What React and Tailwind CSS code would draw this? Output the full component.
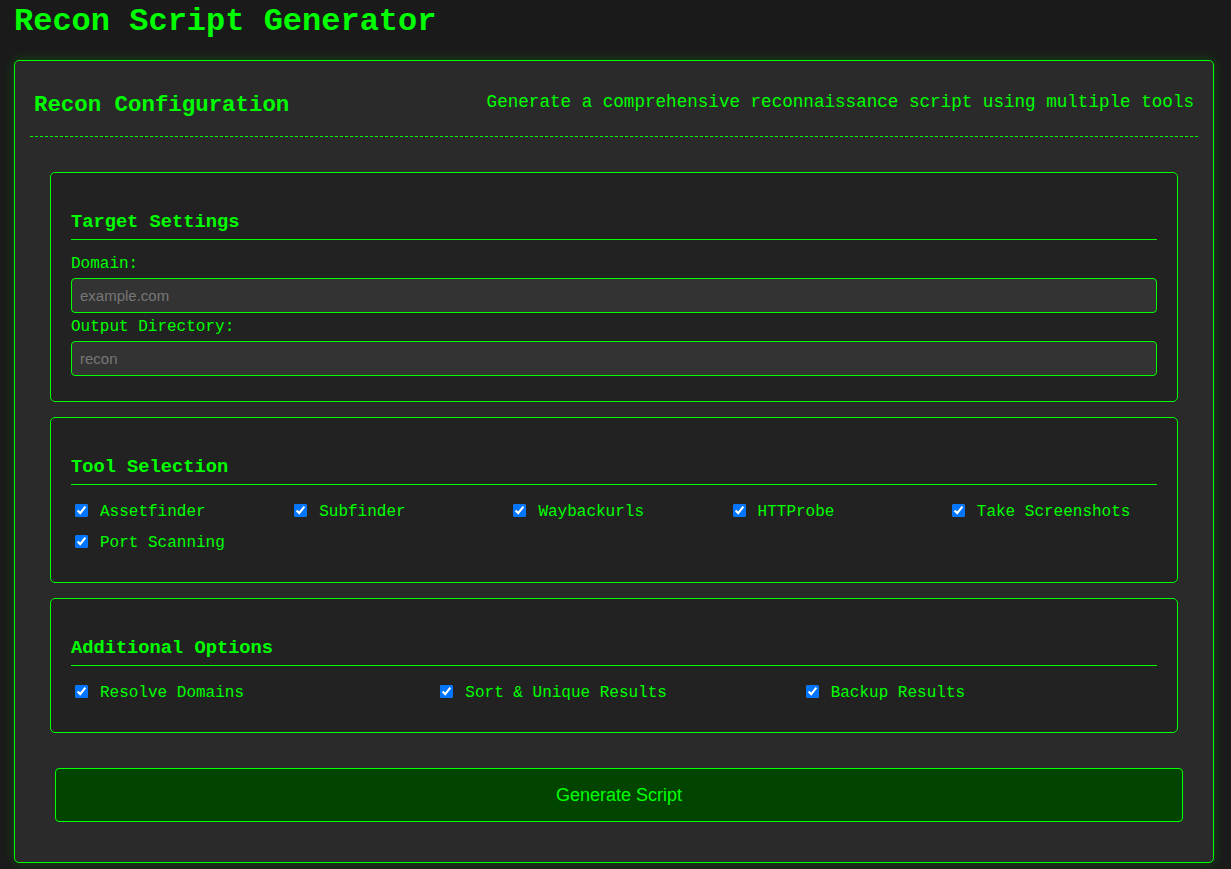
import React from "react";

const mono = { fontFamily: '"Liberation Mono", "Courier New", monospace' };

function Check({ label }) {
  return (
    <label className="flex items-center h-[21px] mb-[10px] text-[16px] leading-[21px] text-[#00ff00] cursor-pointer">
      <input type="checkbox" defaultChecked className="m-0 ml-[4px] mr-[3px] w-[13px] h-[13px] shrink-0" />
      <span className="ml-[9px] mt-[3px] whitespace-nowrap">{label}</span>
    </label>
  );
}

function SectionTitle({ children }) {
  return (
    <h3 className="mt-[19px] mb-[15px] pb-[6px] border-b border-[#00ff00] text-[18.72px] leading-[21px] font-bold text-[#00ff00]">
      {children}
    </h3>
  );
}

function Section({ title, children }) {
  return (
    <div className="bg-[#222222] border border-[#00ff00] rounded-[5px] px-[20px] pt-[20px] pb-[20px] mb-[15px]">
      <SectionTitle>{title}</SectionTitle>
      {children}
    </div>
  );
}

export default function App() {
  const tools = ["Assetfinder", "Subfinder", "Waybackurls", "HTTProbe", "Take Screenshots", "Port Scanning"];
  const opts = ["Resolve Domains", "Sort & Unique Results", "Backup Results"];
  return (
    <div className="min-h-screen bg-[#1a1a1a] pt-[4px] pb-[20px]" style={mono}>
      <div className="ml-[14px] w-[1200px]">
        <h1 className="text-[32px] leading-[36px] font-bold text-[#00ff00] mb-[20px]">Recon Script Generator</h1>
        <div className="bg-[#2a2a2a] border border-[#00ff00] rounded-[5px] p-[15px] shadow-[0_0_12px_rgba(0,255,0,0.22)]">
          <div className="flex justify-between items-start px-[4px] pt-[14px] pb-[20px] border-b border-dashed border-[#00ff00]">
            <h2 className="mt-[2px] -mb-[2px] text-[22.4px] leading-[26px] font-bold text-[#00ff00]">Recon Configuration</h2>
            <p className="mt-[2px] text-[17.6px] leading-[20px] text-[#00ff00]">
              Generate a comprehensive reconnaissance script using multiple tools
            </p>
          </div>
          <div className="px-[20px] pt-[35px] pb-[20px]">
            <Section title="Target Settings">
              <label className="block text-[16px] leading-[18px] text-[#00ff00] mb-[5px]">Domain:</label>
              <input
                type="text"
                placeholder="example.com"
                className="block w-full h-[35px] px-[8px] mb-[5px] bg-[#333333] border border-[#00ff00] rounded-[4px] text-[15px] text-[#00ff00] placeholder:text-[#777777] outline-none"
                style={{ fontFamily: '"Liberation Sans", Arial, sans-serif' }}
              />
              <label className="block text-[16px] leading-[18px] text-[#00ff00] mb-[5px]">Output Directory:</label>
              <input
                type="text"
                placeholder="recon"
                className="block w-full h-[35px] px-[8px] mb-[5px] bg-[#333333] border border-[#00ff00] rounded-[4px] text-[15px] text-[#00ff00] placeholder:text-[#777777] outline-none"
                style={{ fontFamily: '"Liberation Sans", Arial, sans-serif' }}
              />
            </Section>
            <Section title="Tool Selection">
              <div className="grid grid-cols-5 gap-x-[10px]">
                {tools.map((t) => (
                  <Check key={t} label={t} />
                ))}
              </div>
            </Section>
            <Section title="Additional Options">
              <div className="grid grid-cols-3 gap-x-[10px]">
                {opts.map((t) => (
                  <Check key={t} label={t} />
                ))}
              </div>
            </Section>
            <button
              className="block w-full ml-[5px] mt-[35px] mb-[5px] h-[54px] bg-[#004400] border border-[#00ff00] rounded-[4px] text-[18px] text-[#00ff00] cursor-pointer"
              style={{ fontFamily: '"Liberation Sans", Arial, sans-serif' }}
            >
              Generate Script
            </button>
          </div>
        </div>
      </div>
    </div>
  );
}
